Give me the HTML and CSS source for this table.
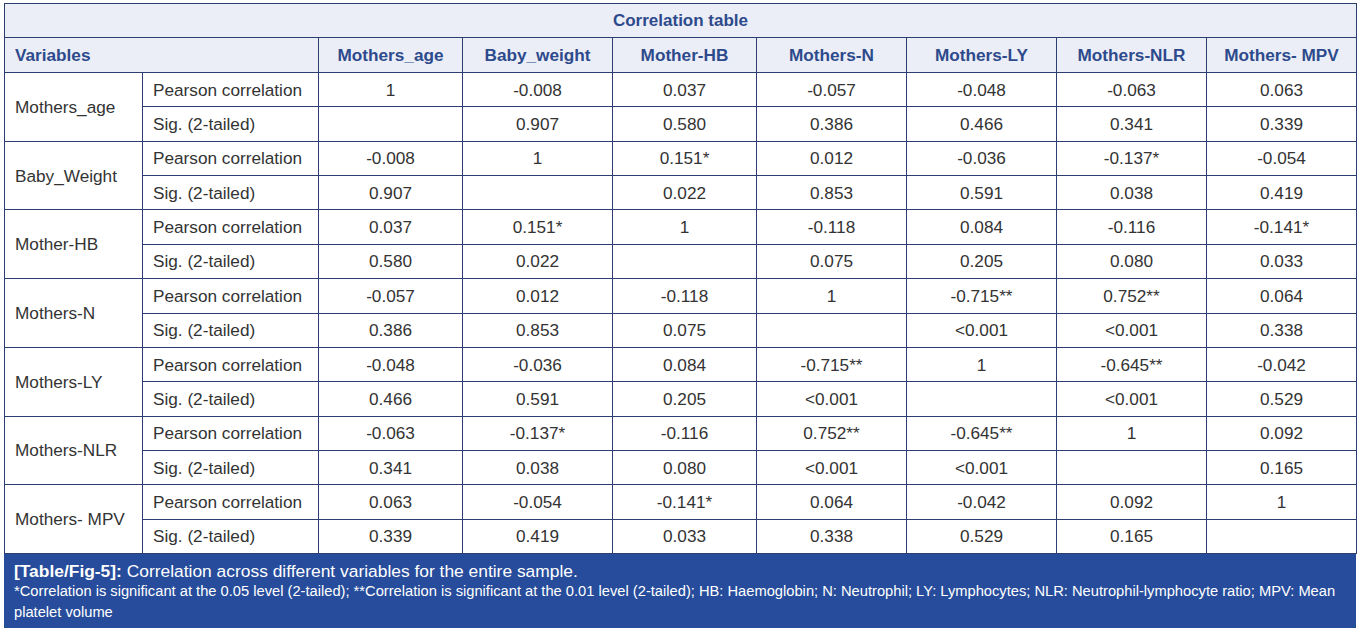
FILE: index.html
```html
<!DOCTYPE html>
<html>
<head>
<meta charset="utf-8">
<link rel="stylesheet" href="styles.css">
</head>
<body>
<div class="wrap">
<table class="corr">
<colgroup>
<col class="c-var"><col class="c-stat"><col class="c-age"><col class="c-n"><col class="c-hb"><col class="c-n"><col class="c-n"><col class="c-n"><col class="c-n">
</colgroup>
<thead>
<tr class="title"><th colspan="9">Correlation table</th></tr>
<tr class="head">
<th colspan="2" class="left">Variables</th>
<th>Mothers_age</th><th>Baby_weight</th><th>Mother-HB</th><th>Mothers-N</th><th>Mothers-LY</th><th>Mothers-NLR</th><th>Mothers- MPV</th>
</tr>
</thead>
<tbody>
<tr><td rowspan="2" class="var">Mothers_age</td><td class="stat">Pearson correlation</td><td>1</td><td>-0.008</td><td>0.037</td><td>-0.057</td><td>-0.048</td><td>-0.063</td><td>0.063</td></tr>
<tr><td class="stat">Sig. (2-tailed)</td><td></td><td>0.907</td><td>0.580</td><td>0.386</td><td>0.466</td><td>0.341</td><td>0.339</td></tr>
<tr><td rowspan="2" class="var">Baby_Weight</td><td class="stat">Pearson correlation</td><td>-0.008</td><td>1</td><td>0.151*</td><td>0.012</td><td>-0.036</td><td>-0.137*</td><td>-0.054</td></tr>
<tr><td class="stat">Sig. (2-tailed)</td><td>0.907</td><td></td><td>0.022</td><td>0.853</td><td>0.591</td><td>0.038</td><td>0.419</td></tr>
<tr><td rowspan="2" class="var">Mother-HB</td><td class="stat">Pearson correlation</td><td>0.037</td><td>0.151*</td><td>1</td><td>-0.118</td><td>0.084</td><td>-0.116</td><td>-0.141*</td></tr>
<tr><td class="stat">Sig. (2-tailed)</td><td>0.580</td><td>0.022</td><td></td><td>0.075</td><td>0.205</td><td>0.080</td><td>0.033</td></tr>
<tr><td rowspan="2" class="var">Mothers-N</td><td class="stat">Pearson correlation</td><td>-0.057</td><td>0.012</td><td>-0.118</td><td>1</td><td>-0.715**</td><td>0.752**</td><td>0.064</td></tr>
<tr><td class="stat">Sig. (2-tailed)</td><td>0.386</td><td>0.853</td><td>0.075</td><td></td><td>&lt;0.001</td><td>&lt;0.001</td><td>0.338</td></tr>
<tr><td rowspan="2" class="var">Mothers-LY</td><td class="stat">Pearson correlation</td><td>-0.048</td><td>-0.036</td><td>0.084</td><td>-0.715**</td><td>1</td><td>-0.645**</td><td>-0.042</td></tr>
<tr><td class="stat">Sig. (2-tailed)</td><td>0.466</td><td>0.591</td><td>0.205</td><td>&lt;0.001</td><td></td><td>&lt;0.001</td><td>0.529</td></tr>
<tr><td rowspan="2" class="var">Mothers-NLR</td><td class="stat">Pearson correlation</td><td>-0.063</td><td>-0.137*</td><td>-0.116</td><td>0.752**</td><td>-0.645**</td><td>1</td><td>0.092</td></tr>
<tr><td class="stat">Sig. (2-tailed)</td><td>0.341</td><td>0.038</td><td>0.080</td><td>&lt;0.001</td><td>&lt;0.001</td><td></td><td>0.165</td></tr>
<tr><td rowspan="2" class="var">Mothers- MPV</td><td class="stat">Pearson correlation</td><td>0.063</td><td>-0.054</td><td>-0.141*</td><td>0.064</td><td>-0.042</td><td>0.092</td><td>1</td></tr>
<tr><td class="stat">Sig. (2-tailed)</td><td>0.339</td><td>0.419</td><td>0.033</td><td>0.338</td><td>0.529</td><td>0.165</td><td></td></tr>
</tbody>
</table>
<div class="caption">
<p class="cap-main"><b>[Table/Fig-5]:</b> Correlation across different variables for the entire sample.</p>
<p class="cap-note">*Correlation is significant at the 0.05 level (2-tailed); **Correlation is significant at the 0.01 level (2-tailed); HB: Haemoglobin; N: Neutrophil; LY: Lymphocytes; NLR: Neutrophil-lymphocyte ratio; MPV: Mean platelet volume</p>
</div>
</div>
</body>
</html>
```
FILE: styles.css
```css
html, body {
  margin: 0;
  padding: 0;
  background: #ffffff;
}
body {
  font-family: "Liberation Sans", Arial, sans-serif;
  color: #333333;
}
.wrap {
  padding: 3px 4px 0 4px;
  width: 1352px;
}
.corr {
  border-collapse: collapse;
  table-layout: fixed;
  width: 1352px;
  font-size: 17.2px;
  line-height: 20px;
}
.c-var { width: 138px; }
.c-stat { width: 176px; }
.c-age { width: 144px; }
.c-hb { width: 144px; }
.c-n { width: 150px; }
.corr th, .corr td {
  border: 1px solid #2c3f70;
  padding: 0 10px;
  text-align: center;
  white-space: nowrap;
  overflow: hidden;
}
.corr thead th {
  background: #eceef7;
  color: #2d4a8c;
}
.title {
  height: 34px;
}
.title th {
  font-weight: bold;
  font-size: 17px;
}
.head {
  height: 35px;
}
.head th {
  font-weight: bold;
}
.corr .left {
  text-align: left;
}
.corr tbody tr {
  height: 34.36px;
}
.corr td.var, .corr td.stat {
  text-align: left;
}
.caption {
  background: #264c9b;
  color: #ffffff;
  padding: 7px 10px 5px 10px;
  height: 62px;
}
.caption p {
  margin: 0;
}
.cap-main {
  font-size: 17.4px;
  line-height: 20px;
}
.cap-note {
  font-size: 14.7px;
  line-height: 21px;
}
```
